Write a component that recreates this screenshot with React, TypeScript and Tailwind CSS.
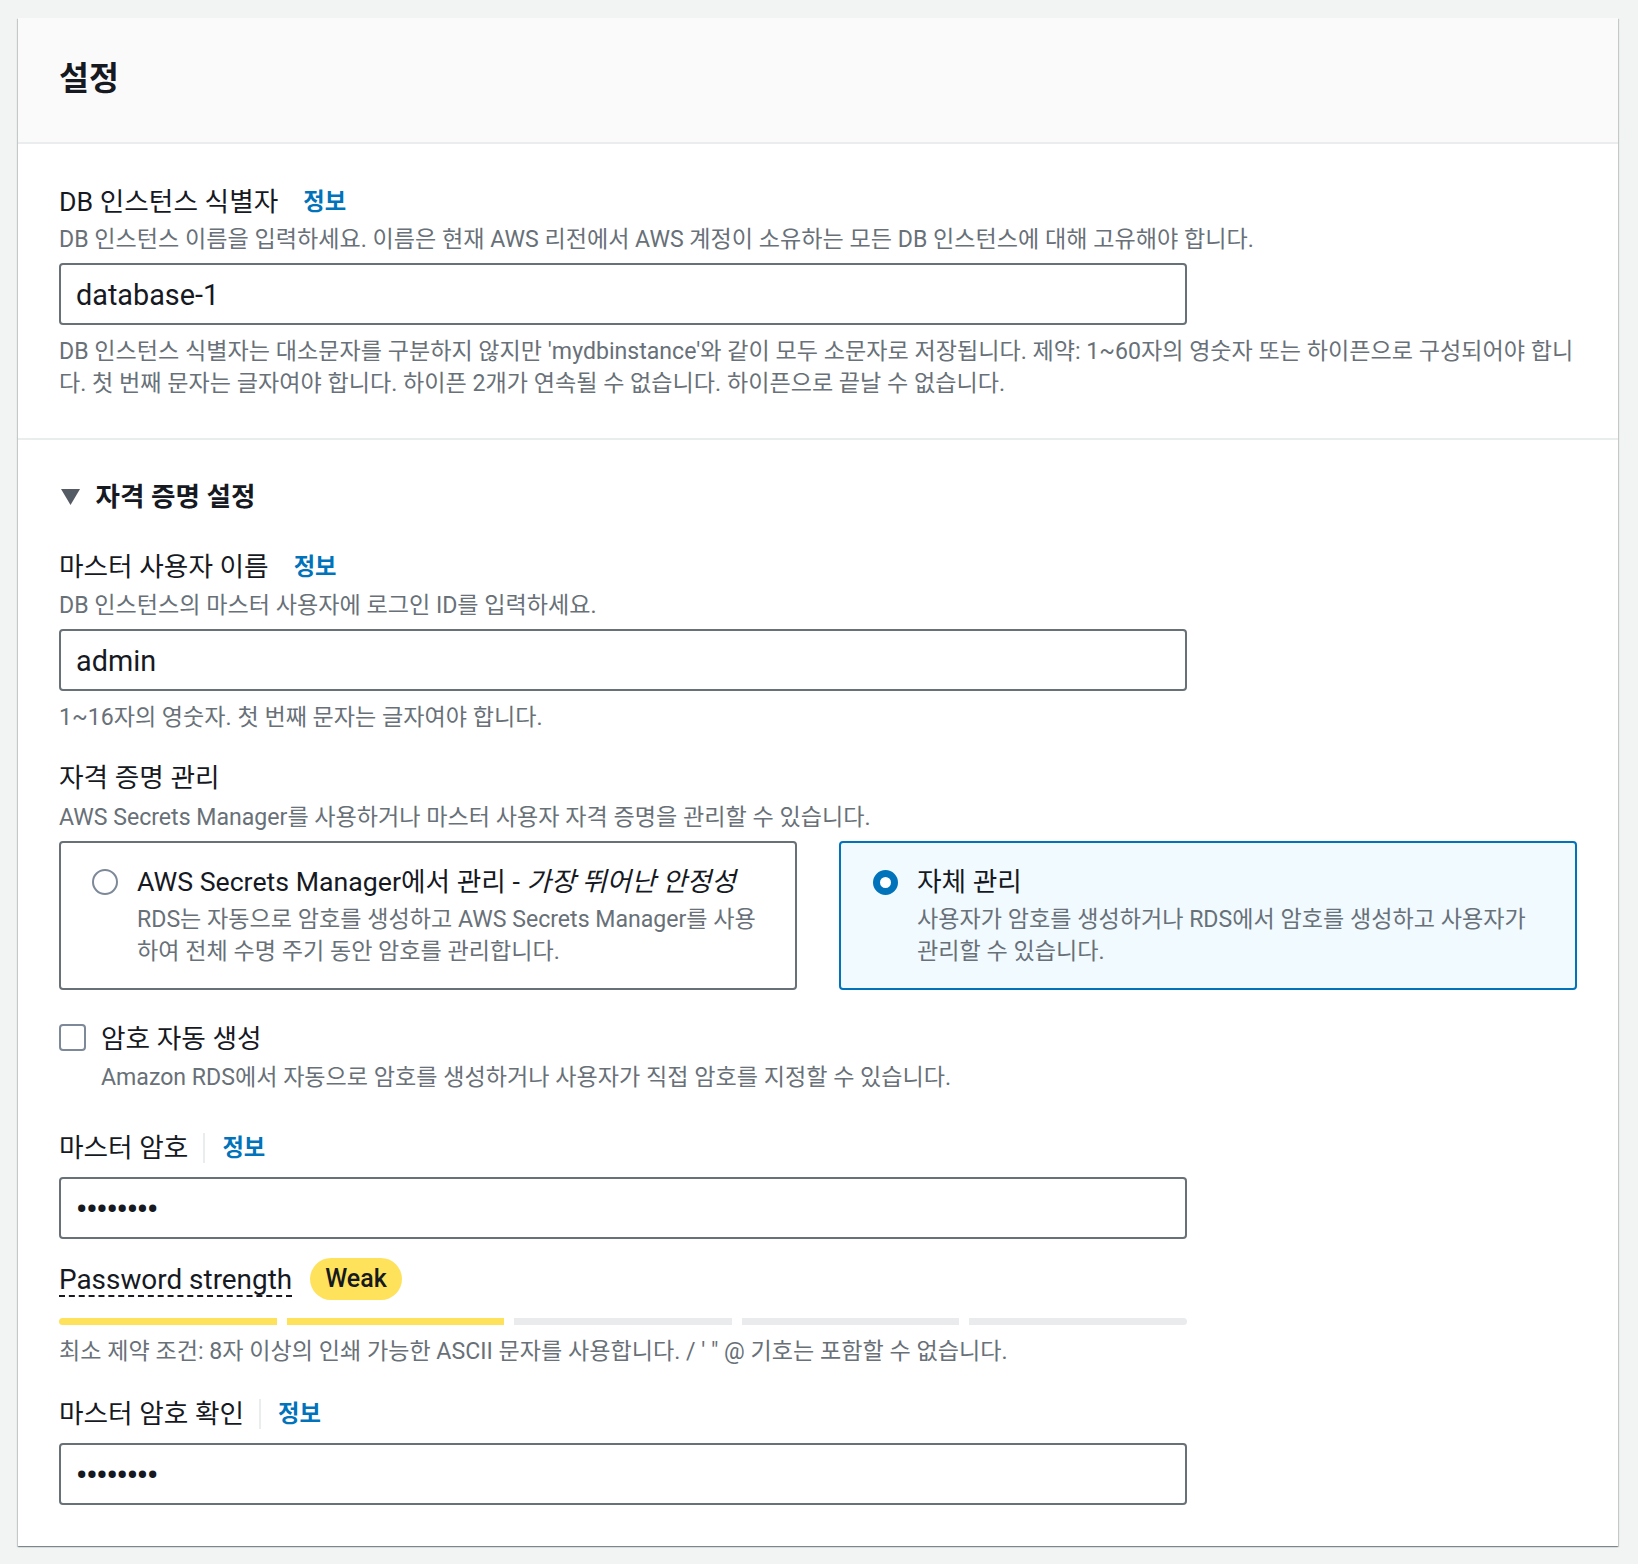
import React from "react";

const LABEL = "text-[26.7px] leading-[32px] text-[#16191f]";
const DESC = "text-[23.1px] leading-[32px] text-[#687078] pt-[2px] -mb-[2px]";
const INFO = "text-[23.3px] leading-[32px] font-bold text-[#0073bb]";
const ROW = "flex items-center h-[32px] pt-[4px]";
const INPUT =
  "w-[1128px] h-[62px] border-2 border-[#687078] rounded-[4px] bg-white px-[15px] pt-[4px] flex items-center text-[28.8px] text-[#16191f]";
const DOTS = "text-[31px] tracking-[-1px] font-bold";

function Radio({ checked }: { checked: boolean }) {
  if (checked) {
    return (
      <span className="w-[25px] h-[25px] rounded-full border-[7px] border-[#0073bb] bg-white shrink-0" />
    );
  }
  return <span className="w-[26px] h-[26px] rounded-full border-2 border-[#7d8998] bg-white shrink-0" />;
}

function Divider() {
  return <span className="ml-[15px] w-[2px] h-[30px] bg-[#eaeded]" />;
}

export default function App() {
  const bars = [true, true, false, false, false];

  return (
    <div className="min-h-screen bg-[#f2f3f3] pt-[18px] pl-[18px] pb-[18px] font-[Roboto,'Noto_Sans_CJK_KR',sans-serif]">
      <div className="w-[1600px] bg-white shadow-[0_1px_1px_0_rgba(0,28,36,0.3),1px_1px_1px_0_rgba(0,28,36,0.15),-1px_1px_1px_0_rgba(0,28,36,0.15)]">
        {/* header */}
        <div className="h-[126px] bg-[#fafafa] border-b-2 border-[#eaeded] px-[41px] pt-[42px]">
          <h2 className="text-[32.5px] leading-[38px] font-bold text-[#16191f]">설정</h2>
        </div>

        {/* identifier */}
        <div className="px-[41px] pt-[40px] pb-[40px] border-b-2 border-[#eaeded]">
          <div className={ROW}>
            <span className={LABEL}>DB 인스턴스 식별자</span>
            <span className={`ml-[25px] ${INFO}`}>정보</span>
          </div>
          <p className={`mt-[6px] ${DESC} whitespace-nowrap`}>
            DB 인스턴스 이름을 입력하세요. 이름은 현재 AWS 리전에서 AWS 계정이 소유하는 모든 DB 인스턴스에 대해 고유해야 합니다.
          </p>
          <div className={`mt-[9px] ${INPUT}`}>database-1</div>
          <p className={`mt-[9px] ${DESC} whitespace-nowrap`}>
            DB 인스턴스 식별자는 대소문자를 구분하지 않지만 'mydbinstance'와 같이 모두 소문자로 저장됩니다. 제약: 1~60자의 영숫자 또는 하이픈으로 구성되어야 합니
            <br />
            다. 첫 번째 문자는 글자여야 합니다. 하이픈 2개가 연속될 수 없습니다. 하이픈으로 끝날 수 없습니다.
          </p>
        </div>

        {/* credentials */}
        <div className="px-[41px] pt-[39px] pb-[41px]">
          <div className={ROW}>
            <svg width="19" height="16" viewBox="0 0 19 16" className="ml-[1.5px]">
              <polygon points="0,0 19,0 9.5,16" fill="#545b64" />
            </svg>
            <span className="ml-[16px] text-[26.6px] leading-[32px] font-bold text-[#16191f]">자격 증명 설정</span>
          </div>

          <div className={`mt-[38px] ${ROW}`}>
            <span className={LABEL}>마스터 사용자 이름</span>
            <span className={`ml-[25px] ${INFO}`}>정보</span>
          </div>
          <p className={`mt-[7px] ${DESC}`}>DB 인스턴스의 마스터 사용자에 로그인 ID를 입력하세요.</p>
          <div className={`mt-[9px] ${INPUT}`}>admin</div>
          <p className={`mt-[9px] ${DESC}`}>1~16자의 영숫자. 첫 번째 문자는 글자여야 합니다.</p>

          <div className={`mt-[28px] ${LABEL} pt-[2px] -mb-[2px]`}>자격 증명 관리</div>
          <p className={`mt-[8px] ${DESC}`}>AWS Secrets Manager를 사용하거나 마스터 사용자 자격 증명을 관리할 수 있습니다.</p>

          <div className="mt-[9px] grid grid-cols-2 gap-[42px]">
            <div className="h-[149px] border-2 border-[#687078] rounded-[4px] pl-[31px] pt-[21px]">
              <div className={ROW}>
                <Radio checked={false} />
                <span className={`ml-[19px] ${LABEL} whitespace-nowrap`}>
                  AWS Secrets Manager에서 관리 - <i>가장 뛰어난 안정성</i>
                </span>
              </div>
              <p className={`mt-[6px] pl-[45px] ${DESC} whitespace-nowrap`}>
                RDS는 자동으로 암호를 생성하고 AWS Secrets Manager를 사용
                <br />
                하여 전체 수명 주기 동안 암호를 관리합니다.
              </p>
            </div>
            <div className="h-[149px] border-2 border-[#0073bb] bg-[#f1faff] rounded-[4px] pl-[32px] pt-[21px]">
              <div className={ROW}>
                <Radio checked />
                <span className={`ml-[19px] ${LABEL}`}>자체 관리</span>
              </div>
              <p className={`mt-[6px] pl-[44px] ${DESC} whitespace-nowrap`}>
                사용자가 암호를 생성하거나 RDS에서 암호를 생성하고 사용자가
                <br />
                관리할 수 있습니다.
              </p>
            </div>
          </div>

          <div className="mt-[31px] flex items-center h-[32px]">
            <span className="w-[27px] h-[27px] border-2 border-[#7d8998] rounded-[4px] bg-white shrink-0" />
            <span className={`ml-[15px] ${LABEL} pt-[4px]`}>암호 자동 생성</span>
          </div>
          <p className={`mt-[7px] pl-[42px] ${DESC}`}>
            Amazon RDS에서 자동으로 암호를 생성하거나 사용자가 직접 암호를 지정할 수 있습니다.
          </p>

          <div className={`mt-[38px] ${ROW}`}>
            <span className={LABEL}>마스터 암호</span>
            <Divider />
            <span className={`ml-[17px] ${INFO}`}>정보</span>
          </div>
          <div className={`mt-[15px] ${INPUT}`}>
            <span className={DOTS}>••••••••</span>
          </div>

          <div className="mt-[19px] flex items-center h-[42px]">
            <span className="mt-[4px] text-[27.9px] leading-[30px] text-[#16191f] border-b-2 border-dashed border-[#16191f]">
              Password strength
            </span>
            <span className="ml-[18px] h-[42px] px-[15px] rounded-full bg-[#fee25b] flex items-center text-[25px] font-medium text-[#16191f]">
              Weak
            </span>
          </div>
          <div className="mt-[18px] w-[1128px] flex gap-[10px]">
            {bars.map((on, i) => (
              <div
                key={i}
                className={`flex-1 h-[7px] ${on ? "bg-[#fee25b]" : "bg-[#e9ebed]"} ${i === 0 ? "rounded-l-full" : ""} ${
                  i === 4 ? "rounded-r-full" : ""
                }`}
              />
            ))}
          </div>
          <p className={`mt-[9px] ${DESC}`}>
            최소 제약 조건: 8자 이상의 인쇄 가능한 ASCII 문자를 사용합니다. / ' " @ 기호는 포함할 수 없습니다.
          </p>

          <div className={`mt-[30px] ${ROW}`}>
            <span className={LABEL}>마스터 암호 확인</span>
            <Divider />
            <span className={`ml-[17px] ${INFO}`}>정보</span>
          </div>
          <div className={`mt-[15px] ${INPUT}`}>
            <span className={DOTS}>••••••••</span>
          </div>
        </div>
      </div>
    </div>
  );
}
